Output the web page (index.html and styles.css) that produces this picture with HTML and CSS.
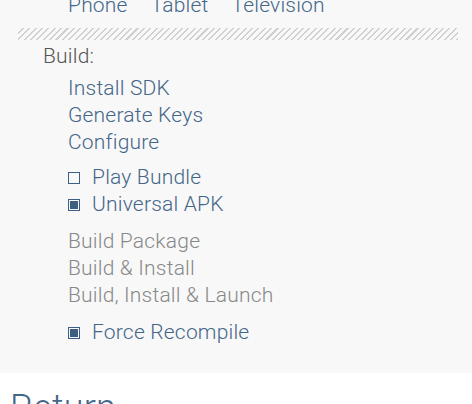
FILE: index.html
```html
<!DOCTYPE html>
<html>
  <head>
    <title>Build</title>
    <link rel="stylesheet" href="styles.css">
  </head>
  <body>
    <div class="panel">
      <div class="devices">
        <a class="link">Phone</a>
        <a class="link">Tablet</a>
        <a class="link">Television</a>
      </div>
      <div class="hatch"></div>
      <div class="section">
        <div class="title">Build:</div>
        <div class="items">
          <div class="group">
            <a class="link">Install SDK</a>
            <a class="link">Generate Keys</a>
            <a class="link">Configure</a>
          </div>
          <div class="group tight">
            <label class="check"><span class="box"></span>Play Bundle</label>
            <label class="check"><span class="box on"></span>Universal APK</label>
          </div>
          <div class="group">
            <span class="muted">Build Package</span>
            <span class="muted">Build &amp; Install</span>
            <span class="muted">Build, Install &amp; Launch</span>
          </div>
          <div class="group">
            <label class="check"><span class="box on"></span>Force Recompile</label>
          </div>
        </div>
      </div>
    </div>
    <h1 class="heading">Return</h1>
  </body>
</html>
```

FILE: styles.css
```css
body {
  margin: 0;
  background-color: #fff;
  font-family: Roboto, "Liberation Sans", sans-serif;
  font-weight: 300;
  letter-spacing: 0.2px;
}

.panel {
  background-color: #f8f8f8;
  padding-bottom: 27px;
}

.link {
  color: #446688;
}

.devices {
  display: flex;
  gap: 23px;
  margin-top: -8px;
  padding-left: 68px;
  font-size: 21px;
  line-height: 27px;
}

.hatch {
  height: 12px;
  margin: 9px 14px 0 18px;
  background: repeating-linear-gradient(
    -45deg,
    #d0d0d0 0,
    #d0d0d0 1.5px,
    transparent 1.5px,
    transparent 4.5px
  );
}

.section {
  padding: 3px 0 0 43px;
}

.title {
  color: #555;
  font-size: 21px;
  line-height: 27px;
}

.items {
  padding-left: 25px;
  font-size: 21px;
  line-height: 27px;
}

.group {
  display: flex;
  flex-direction: column;
  align-items: flex-start;
  margin-top: 10px;
}

.group:first-child {
  margin-top: 5px;
}

.group.tight {
  margin-top: 8px;
}

.muted {
  color: #888;
}

.check {
  display: flex;
  align-items: center;
  gap: 12px;
  color: #446688;
}

.box {
  width: 8px;
  height: 8px;
  border: 1px solid #3d5f80;
  background-clip: content-box;
  padding: 1px;
}

.box.on {
  background-color: #3d5f80;
}

.heading {
  margin: 14px 0 0 10px;
  color: #446688;
  font-size: 36px;
  font-weight: 300;
}
```
